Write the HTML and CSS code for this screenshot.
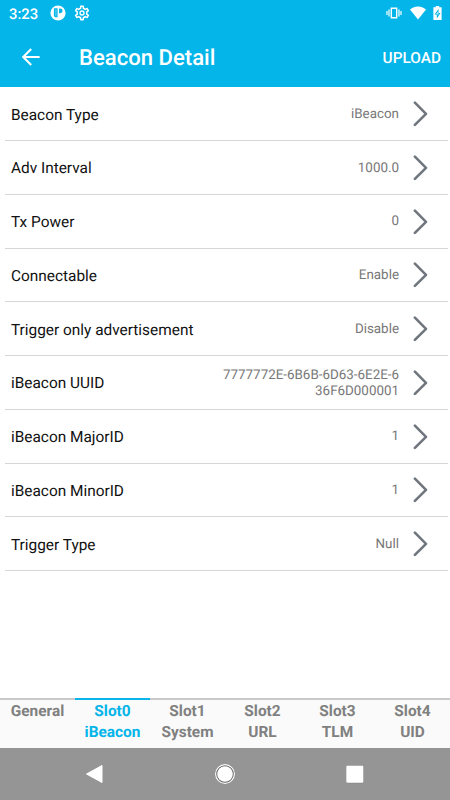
FILE: index.html
```html
<!DOCTYPE html>
<html lang="en">
<head>
<meta charset="utf-8">
<title>Beacon Detail</title>
<link rel="stylesheet" href="styles.css">
</head>
<body>
<svg class="defs" width="0" height="0"><symbol id="chevron" viewBox="0 0 16 26"><path d="M1.9 1.7 13 12.8 1.9 23.9" fill="none" stroke="#70767d" stroke-width="2.6" stroke-linecap="round" stroke-linejoin="round"/></symbol></svg>
<header class="header">
  <div class="status">
    <span class="clock">3:23</span>
    <svg class="app-icon" width="16" height="16" viewBox="0 0 16 16"><circle cx="8" cy="8" r="7.6" fill="#fff"/><path d="M3.9 3.3h3.7v8.9H5.2L3.9 10.9z" fill="#04b5e9"/><path d="M5 4.3h1.7v7H5.8L5 10.5z" fill="#fff" opacity=".25"/><path d="M9 3.4h1.2a2.4 2.4 0 0 1 0 4.8H9z" fill="#04b5e9"/></svg>
    <svg class="gear" width="16" height="16" viewBox="1.2 1.2 21.6 21.6"><path fill="#fff" d="M19.43 12.98c.04-.32.07-.64.07-.98s-.03-.66-.07-.98l2.11-1.65c.19-.15.24-.42.12-.64l-2-3.46c-.12-.22-.39-.3-.61-.22l-2.49 1c-.52-.4-1.08-.73-1.69-.98l-.38-2.65A.488.488 0 0 0 14 2h-4c-.25 0-.46.18-.49.42l-.38 2.65c-.61.25-1.17.59-1.69.98l-2.49-1c-.23-.09-.49 0-.61.22l-2 3.46c-.13.22-.07.49.12.64l2.11 1.65c-.04.32-.07.65-.07.98s.03.66.07.98l-2.11 1.65c-.19.15-.24.42-.12.64l2 3.46c.12.22.39.3.61.22l2.49-1c.52.4 1.08.73 1.69.98l.38 2.65c.03.24.24.42.49.42h4c.25 0 .46-.18.49-.42l.38-2.65c.61-.25 1.17-.59 1.69-.98l2.49 1c.23.09.49 0 .61-.22l2-3.46c.12-.22.07-.49-.12-.64l-2.11-1.65zm-1.98-1.71c.04.31.05.52.05.73s-.02.43-.05.73l-.14 1.13.89.7 1.08.84-.7 1.21-1.27-.51-1.04-.42-.9.68c-.43.32-.84.56-1.25.73l-1.06.43-.16 1.13-.2 1.35h-1.4l-.35-2.48-1.06-.43c-.43-.18-.83-.41-1.23-.71l-.91-.7-1.06.43-1.27.51-.7-1.21 1.08-.84.89-.7-.14-1.13c-.03-.31-.05-.54-.05-.74s.02-.43.05-.73l.14-1.13-.89-.7-1.08-.84.7-1.21 1.27.51 1.04.42.9-.68c.43-.32.84-.56 1.25-.73l1.06-.43.16-1.13.2-1.35h1.39l.35 2.48 1.06.43c.43.18.83.41 1.23.71l.91.7 1.06-.43 1.27-.51.7 1.21-1.07.85-.89.7.14 1.13zM12 8.4a3.6 3.6 0 1 0 0 7.2 3.6 3.6 0 0 0 0-7.2zm0 1.8a1.8 1.8 0 1 1 0 3.6 1.8 1.8 0 0 1 0-3.6z"/></svg>
    <svg class="vibrate" width="16" height="14" viewBox="0 0 16 14"><path d="M5.3 2.2h5.4v9.6H5.3z" fill="none" stroke="#fff" stroke-width="1.4"/><path d="M3 3.4v7.2M1 5v4M13 3.4v7.2M15 5v4" fill="none" stroke="#fff" stroke-width="1.2"/></svg>
    <svg class="wifi" width="16" height="14" viewBox="0 0 16 14"><path d="M0 3.5C4.8-.4 11.2-.4 16 3.5L8 13.6z" fill="#fff"/></svg>
    <svg class="battery" width="9" height="14" viewBox="0 0 9 14"><path d="M2.8 0h3.4v1.3H8.6V14H.4V1.3h2.4z" fill="#fff"/><path d="M5.5 3 1.5 8.4h2.3v4.2l3.7-5.6H5.5z" fill="#04b5e9"/><path d="M4.7 5.8 3.2 7.7h1.5v1.6l1.2-1.7H4.7z" fill="#fff"/></svg>
  </div>
  <div class="toolbar">
    <svg class="back" width="18" height="18" viewBox="0 0 18 18"><path d="M17.6 9H1.3M9.2 1 1.2 9l8 8" fill="none" stroke="#fff" stroke-width="2"/></svg>
    <h1 class="title">Beacon Detail</h1>
    <span class="upload">UPLOAD</span>
  </div>
</header>
<main class="list">
  <div class="row"><span class="label">Beacon Type</span><span class="value">iBeacon</span><svg class="chevron"><use href="#chevron"/></svg></div>
  <div class="row"><span class="label">Adv Interval</span><span class="value">1000.0</span><svg class="chevron"><use href="#chevron"/></svg></div>
  <div class="row"><span class="label">Tx Power</span><span class="value">0</span><svg class="chevron"><use href="#chevron"/></svg></div>
  <div class="row"><span class="label">Connectable</span><span class="value">Enable</span><svg class="chevron"><use href="#chevron"/></svg></div>
  <div class="row"><span class="label">Trigger only advertisement</span><span class="value">Disable</span><svg class="chevron"><use href="#chevron"/></svg></div>
  <div class="row"><span class="label">iBeacon UUID</span><span class="value">7777772E-6B6B-6D63-6E2E-6<br>36F6D000001</span><svg class="chevron"><use href="#chevron"/></svg></div>
  <div class="row"><span class="label">iBeacon MajorID</span><span class="value">1</span><svg class="chevron"><use href="#chevron"/></svg></div>
  <div class="row"><span class="label">iBeacon MinorID</span><span class="value">1</span><svg class="chevron"><use href="#chevron"/></svg></div>
  <div class="row"><span class="label">Trigger Type</span><span class="value">Null</span><svg class="chevron"><use href="#chevron"/></svg></div>
</main>
<nav class="tabs">
  <div class="tab">General</div>
  <div class="tab active">Slot0<br>iBeacon</div>
  <div class="tab">Slot1<br>System</div>
  <div class="tab">Slot2<br>URL</div>
  <div class="tab">Slot3<br>TLM</div>
  <div class="tab">Slot4<br>UID</div>
</nav>
<footer class="navbar">
  <svg width="22" height="22" viewBox="0 0 22 22"><path d="M2.5 11 18 2.5v17z" fill="#fff" stroke="#fff" stroke-linejoin="round"/></svg>
  <svg width="22" height="22" viewBox="0 0 22 22"><circle cx="11" cy="11" r="10" fill="#666"/><circle cx="11" cy="11" r="9.4" fill="none" stroke="#fff" stroke-width="1.2"/><circle cx="11" cy="11" r="7.8" fill="#fff"/></svg>
  <svg width="22" height="22" viewBox="0 0 22 22"><rect x="2.3" y="3.3" width="17" height="17" rx="1" fill="#808080"/><rect x="2.3" y="2.7" width="17" height="17" rx="1" fill="#fff"/></svg>
</footer>
</body>
</html>
```
FILE: styles.css
```css
* { box-sizing: border-box; }
body {
  margin: 0;
  width: 450px;
  height: 800px;
  display: flex;
  flex-direction: column;
  overflow: hidden;
  background: #fff;
  font-family: Roboto, sans-serif;
  text-rendering: geometricPrecision;
}
.defs { position: absolute; }
.header { height: 87.3px; flex: none; background: #04b5e9; color: #fff; }
.status { height: 26px; display: flex; align-items: center; padding: 0 8px 0 9px; }
.clock { width: 40.5px; font-size: 14.8px; font-weight: 500; line-height: 26px; padding-top: 2px; }
.gear { margin-left: 8.5px; }
.vibrate { margin-left: auto; }
.wifi { margin-left: 8px; }
.battery { margin-left: 7px; }
.toolbar { height: 61px; display: flex; align-items: center; padding: 1px 9px 0 22px; }
.title { margin: 0 0 0 39px; padding-top: 2px; font-size: 22.1px; font-weight: 500; }
.upload { margin-left: auto; padding-top: 1px; font-size: 15.4px; font-weight: 500; }
.list { flex: 1; padding: 0 2px 0 5px; }
.row {
  height: 53.75px;
  display: flex;
  align-items: center;
  padding: 1px 19px 0 6px;
  border-bottom: 1px solid #d6d6d6;
}
.label { font-size: 15.4px; color: #111; padding-top: 1px; }
.value {
  margin-left: auto;
  padding-top: 1.4px;
  font-size: 13.4px;
  line-height: 16px;
  text-align: right;
  color: #777;
}
.chevron { width: 16px; height: 26px; margin-left: 14px; flex: none; }
.tabs { flex: none; height: 50px; display: flex; background: #fafafa; }
.tab {
  flex: 1;
  border-top: 2px solid #c9c9c9;
  padding-top: 1.4px;
  text-align: center;
  font-size: 15.4px;
  line-height: 21.3px;
  font-weight: 700;
  color: #808080;
}
.tab.active { color: #04b5e9; border-color: #04b5e9; }
.navbar {
  flex: none;
  height: 52.4px;
  padding: 0 30px;
  display: grid;
  grid-template-columns: repeat(3, 1fr);
  place-items: center;
  background: #959595;
}
```
